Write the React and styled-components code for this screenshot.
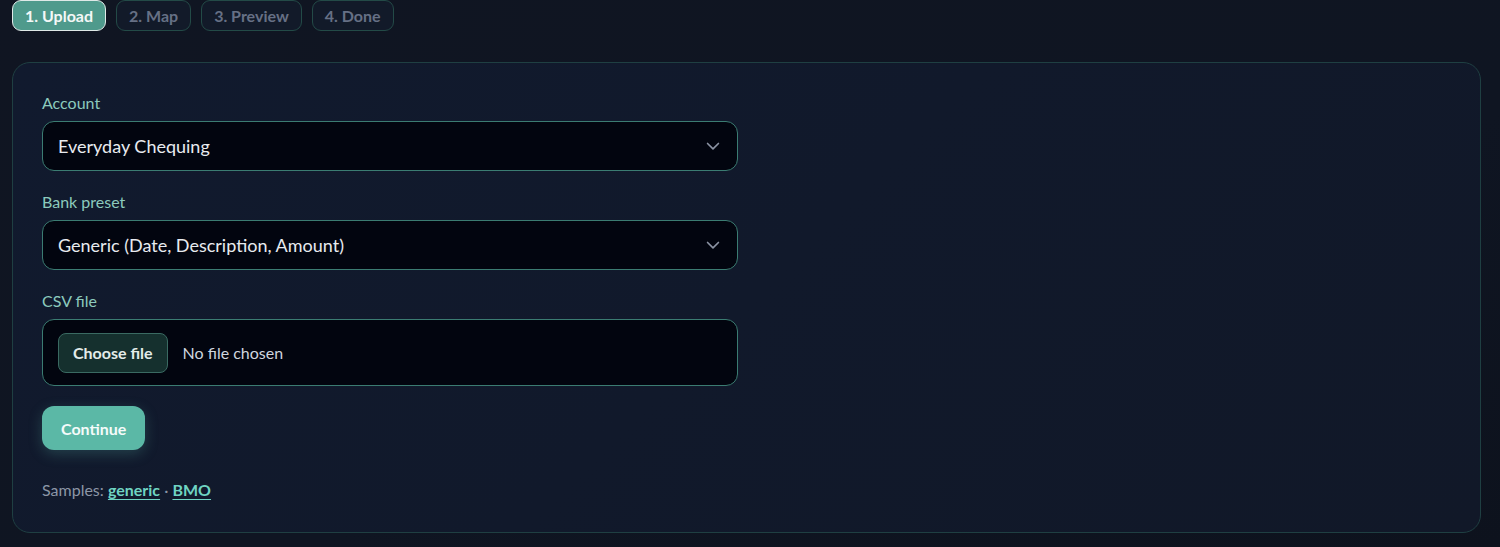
import React from "react";
import styled, { createGlobalStyle } from "styled-components";

const GlobalStyle = createGlobalStyle`
  html, body {
    margin: 0;
    padding: 0;
    background: linear-gradient(160deg, #101522 0%, #0f1522 60%, #0d121d 100%);
    min-height: 100%;
  }
  body {
    font-family: "Lato", "Noto Sans", sans-serif;
    color: #e5e7eb;
  }
  * { box-sizing: border-box; }
`;

const steps = ["1. Upload", "2. Map", "3. Preview", "4. Done"];

const Chevron = () => (
  <svg width="20" height="20" viewBox="0 0 24 24" fill="none" stroke="#8b93a3" strokeWidth="2" strokeLinecap="round" strokeLinejoin="round">
    <path d="M5.5 9l6.5 6.5 6.5-6.5" />
  </svg>
);

export default function App() {
  return (
    <Page>
      <GlobalStyle />
      <Steps>
        {steps.map((s, i) => (
          <Step key={s} active={i === 0}>
            {s}
          </Step>
        ))}
      </Steps>

      <Card>
        <Field>
          <Label>Account</Label>
          <Select>
            <span>Everyday Chequing</span>
            <Chevron />
          </Select>
        </Field>

        <Field>
          <Label>Bank preset</Label>
          <Select>
            <span>Generic (Date, Description, Amount)</span>
            <Chevron />
          </Select>
        </Field>

        <Field>
          <Label>CSV file</Label>
          <FileBox>
            <FileButton>Choose file</FileButton>
            <FileName>No file chosen</FileName>
          </FileBox>
        </Field>

        <Continue>Continue</Continue>

        <Samples>
          Samples: <SampleLink href="#">generic</SampleLink> · <SampleLink href="#">BMO</SampleLink>
        </Samples>
      </Card>
    </Page>
  );
}

const Page = styled.div`
  padding: 0 19px 15px 12px;
`;

const Steps = styled.div`
  display: flex;
  gap: 10px;
  margin-bottom: 31px;
`;

const Step = styled.div`
  height: 31px;
  padding: 0 12px;
  display: flex;
  align-items: center;
  border-radius: 9px;
  font-size: 16px;
  font-weight: 700;
  border: 1.5px solid ${(p) => (p.active ? "#dfe9e7" : "#234a47")};
  background: ${(p) => (p.active ? "#4f9a8c" : "#121a29")};
  color: ${(p) => (p.active ? "#f4f8f7" : "#667085")};
`;

const Card = styled.div`
  border: 1px solid #1f3f42;
  border-radius: 18px;
  background: linear-gradient(135deg, #111a2e 0%, #111828 100%);
  padding: 30px 29px 33px;
  display: flex;
  flex-direction: column;
  align-items: flex-start;
`;

const Field = styled.div`
  width: 696px;
  margin-bottom: 21px;
`;

const Label = styled.div`
  font-size: 16px;
  color: #8ccabd;
  margin-bottom: 8px;
  line-height: 20px;
`;

const Select = styled.div`
  height: 50px;
  border: 1.5px solid #3b7c72;
  border-radius: 12px;
  background: #02050f;
  display: flex;
  align-items: center;
  justify-content: space-between;
  padding: 0 14px 0 15px;
  font-size: 18px;
  color: #e8ebef;
`;

const FileBox = styled.div`
  height: 67px;
  border: 1.5px solid #3b7c72;
  border-radius: 12px;
  background: #02050f;
  display: flex;
  align-items: center;
  padding: 0 15px;
  gap: 15px;
`;

const FileButton = styled.div`
  height: 40px;
  padding: 0 14px;
  display: flex;
  align-items: center;
  border: 1.5px solid #3a6a62;
  border-radius: 8px;
  background: #15302e;
  color: #e3ece9;
  font-size: 16px;
  font-weight: 700;
`;

const FileName = styled.span`
  font-size: 16px;
  color: #cfd6df;
`;

const Continue = styled.button`
  height: 44px;
  padding: 0 19px;
  border: none;
  border-radius: 12px;
  background: #5bb8a6;
  color: #f5fbfa;
  font-family: inherit;
  font-size: 16px;
  font-weight: 700;
  box-shadow: 0 4px 14px rgba(91, 184, 166, 0.25);
  margin-top: -1px;
  margin-bottom: 30px;
`;

const Samples = styled.div`
  font-size: 16px;
  color: #8c96a6;
`;

const SampleLink = styled.a`
  color: #6fd4c2;
  font-weight: 700;
  text-decoration: underline;
  text-underline-offset: 3px;
`;
